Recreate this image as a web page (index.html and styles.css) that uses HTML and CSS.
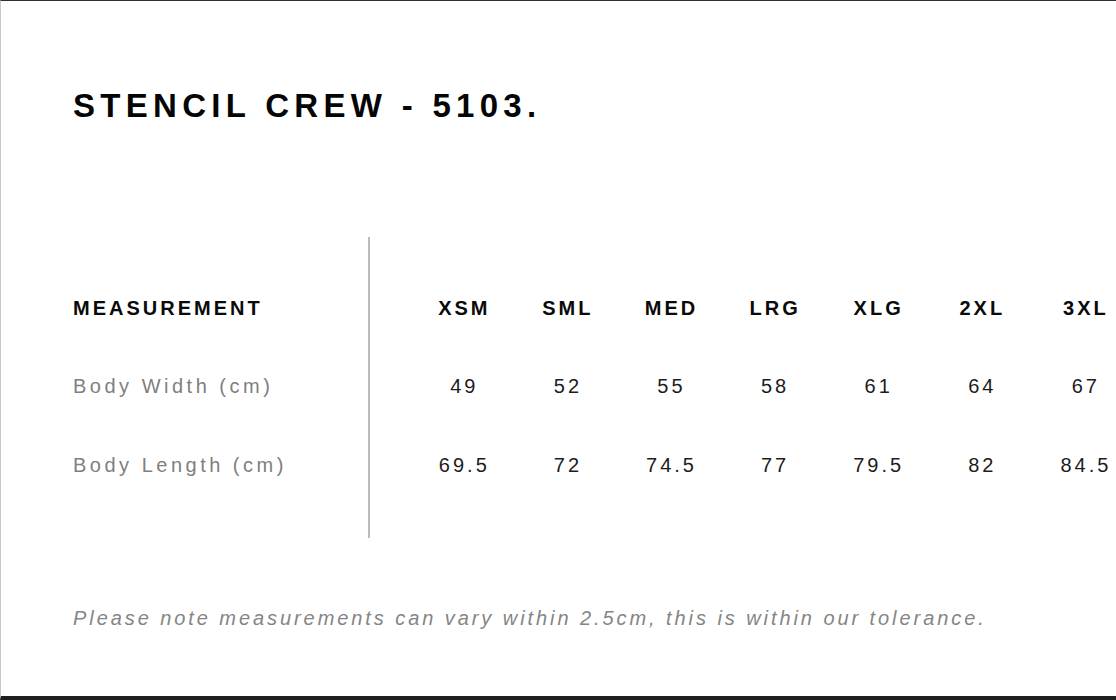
FILE: index.html
```html
<!DOCTYPE html>
<html lang="en">
<head>
<meta charset="utf-8">
<title>Stencil Crew - 5103 Size Chart</title>
<link rel="stylesheet" href="styles.css">
</head>
<body>
<div class="page">
  <h1 class="title">STENCIL CREW - 5103.</h1>
  <div class="chart">
    <div class="labels">
      <div class="cell head">MEASUREMENT</div>
      <div class="cell label">Body Width (cm)</div>
      <div class="cell label">Body Length (cm)</div>
    </div>
    <div class="divider"></div>
    <div class="sizes">
      <div class="cell head">XSM</div>
      <div class="cell head">SML</div>
      <div class="cell head">MED</div>
      <div class="cell head">LRG</div>
      <div class="cell head">XLG</div>
      <div class="cell head">2XL</div>
      <div class="cell head">3XL</div>
      <div class="cell num">49</div>
      <div class="cell num">52</div>
      <div class="cell num">55</div>
      <div class="cell num">58</div>
      <div class="cell num">61</div>
      <div class="cell num">64</div>
      <div class="cell num">67</div>
      <div class="cell num">69.5</div>
      <div class="cell num">72</div>
      <div class="cell num">74.5</div>
      <div class="cell num">77</div>
      <div class="cell num">79.5</div>
      <div class="cell num">82</div>
      <div class="cell num">84.5</div>
    </div>
  </div>
  <p class="note">Please note measurements can vary within 2.5cm, this is within our tolerance.</p>
</div>
</body>
</html>
```

FILE: styles.css
```css
html, body {
  margin: 0;
  padding: 0;
  background: #ffffff;
  overflow: hidden;
}

.page {
  box-sizing: border-box;
  width: 1116px;
  height: 700px;
  border-top: 1px solid #2e2e2e;
  border-left: 1px solid #c9c9c9;
  border-bottom: 4px solid #1e1e1e;
  padding-left: 72px;
  overflow: hidden;
  font-family: "Liberation Sans", Arial, sans-serif;
  background: #fff;
}

.title {
  margin: 0;
  padding-top: 85px;
  font-size: 33px;
  line-height: 40px;
  font-weight: 700;
  letter-spacing: 5.3px;
  color: #050505;
  white-space: nowrap;
}

.chart {
  display: flex;
  margin-top: 111px;
  height: 301px;
  width: 1200px;
}

.labels {
  width: 295px;
  display: grid;
  grid-template-rows: 79px 79px 79px;
  align-content: center;
}

.divider {
  width: 2px;
  background: #bcbcbc;
}

.sizes {
  margin-left: 41px;
  display: grid;
  grid-template-columns: repeat(7, 103.6px);
  grid-template-rows: 79px 79px 79px;
  align-content: center;
}

.cell {
  font-size: 20px;
  line-height: 79px;
  letter-spacing: 3px;
  white-space: nowrap;
}

.sizes .cell {
  text-align: center;
  padding-left: 3px;
}

.head {
  font-weight: 700;
  color: #0a0a0a;
}

.label {
  color: #808080;
  letter-spacing: 3.5px;
  line-height: 77px;
}

.num {
  color: #1c1c1c;
  line-height: 77px;
}

.note {
  margin: 65px 0 0;
  font-size: 20px;
  line-height: 30px;
  font-style: italic;
  letter-spacing: 2.93px;
  color: #858585;
  white-space: nowrap;
}
```
